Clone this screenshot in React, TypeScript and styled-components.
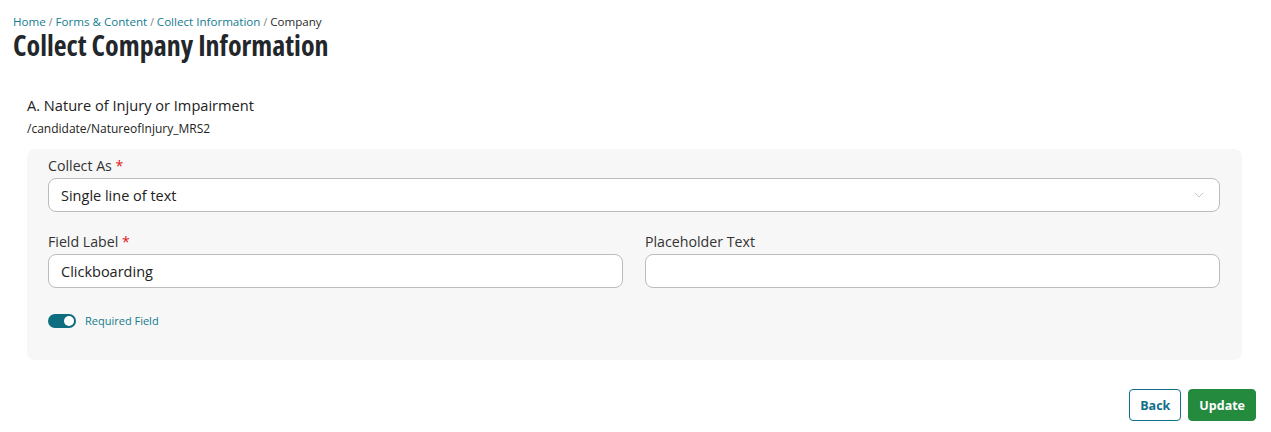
import React from "react";
import styled, { createGlobalStyle } from "styled-components";
import { ChevronDown } from "lucide-react";

const GlobalStyle = createGlobalStyle`
  html, body { margin: 0; padding: 0; background: #ffffff; }
  body { font-family: "Open Sans", "Noto Sans", Arial, sans-serif; color: #222; }
  * { box-sizing: border-box; }
`;

const Page = styled.div`
  display: flex;
  flex-direction: column;
  padding: 14px 15px 0 13px;
`;

const Breadcrumb = styled.nav`
  display: flex;
  align-items: center;
  font-size: 11.6px;
  line-height: 16px;
  color: #333;
`;

const Crumb = styled.a<{ $current?: boolean }>`
  color: ${(p) => (p.$current ? "#2b2b2b" : "#147d90")};
  text-decoration: none;
`;

const Sep = styled.span`
  color: #777;
  margin: 0 3px;
  font-size: 10px;
`;

const Title = styled.h1`
  margin: 0;
  font-family: "Open Sans", "Noto Sans", sans-serif;
  font-stretch: 75%;
  font-weight: 700;
  font-size: 28px;
  line-height: 30px;
  letter-spacing: 0;
  color: #23272b;
`;

const Section = styled.section`
  display: flex;
  flex-direction: column;
  margin: 35px 14px 0 14px;
`;

const SectionHeading = styled.h2`
  margin: 0;
  font-size: 14.6px;
  font-weight: 400;
  line-height: 20px;
  color: #222;
`;

const SectionPath = styled.div`
  margin-top: 6px;
  font-size: 12px;
  line-height: 16px;
  color: #222;
`;

const Panel = styled.div`
  margin-top: 12px;
  background: #f7f7f7;
  border-radius: 8px;
  padding: 8px 22px 32px 21px;
  display: flex;
  flex-direction: column;
`;

const Row = styled.div<{ $cols?: number }>`
  display: grid;
  grid-template-columns: repeat(${(p) => p.$cols ?? 1}, 1fr);
  column-gap: 22px;
  margin-top: ${(p) => (p.$cols ? "21px" : "0")};
`;

const Field = styled.div`
  display: flex;
  flex-direction: column;
`;

const Label = styled.label`
  font-size: 14.2px;
  line-height: 18px;
  color: #333;
  margin-bottom: 3px;
`;

const Req = styled.span`
  color: #e3141b;
`;

const SelectBox = styled.div`
  height: 34px;
  border: 1px solid #bcbcbc;
  border-radius: 8px;
  background: #fff;
  display: flex;
  align-items: center;
  padding: 0 12px;
  font-size: 14.5px;
  color: #222;
`;

const SelectText = styled.span`
  flex: 1;
`;

const Chevron = styled.span`
  display: flex;
  color: #a8a8a8;
`;

const TextInput = styled.input`
  height: 34px;
  border: 1px solid #bcbcbc;
  border-radius: 8px;
  background: #fff;
  padding: 0 12px;
  font-family: inherit;
  font-size: 14.5px;
  color: #222;
  outline: none;
`;

const ToggleRow = styled.div`
  display: flex;
  align-items: center;
  gap: 9px;
  margin-top: 26px;
`;

const Toggle = styled.span<{ $on?: boolean }>`
  position: relative;
  width: 28px;
  height: 14px;
  border-radius: 7px;
  background: ${(p) => (p.$on ? "#0e6e80" : "#bbb")};
  &::after {
    content: "";
    position: absolute;
    top: 2px;
    left: ${(p) => (p.$on ? "16px" : "2px")};
    width: 10px;
    height: 10px;
    border-radius: 50%;
    background: #fff;
  }
`;

const ToggleLabel = styled.span`
  font-size: 11px;
  line-height: 14px;
  color: #137a8c;
`;

const Actions = styled.div`
  display: flex;
  justify-content: flex-end;
  gap: 7px;
  margin-top: 29px;
`;

const Button = styled.button<{ $primary?: boolean }>`
  height: 32px;
  padding: 0 10px;
  border-radius: 4px;
  font-family: inherit;
  font-size: 12.5px;
  font-weight: 700;
  cursor: pointer;
  border: 1px solid ${(p) => (p.$primary ? "#238a3e" : "#10708a")};
  background: ${(p) => (p.$primary ? "#238a3e" : "#fff")};
  color: ${(p) => (p.$primary ? "#fff" : "#10708a")};
`;

export default function App() {
  return (
    <>
      <GlobalStyle />
      <Page>
        <Breadcrumb>
          <Crumb href="#">Home</Crumb>
          <Sep>/</Sep>
          <Crumb href="#">Forms &amp; Content</Crumb>
          <Sep>/</Sep>
          <Crumb href="#">Collect Information</Crumb>
          <Sep>/</Sep>
          <Crumb $current>Company</Crumb>
        </Breadcrumb>
        <Title>Collect Company Information</Title>
        <Section>
          <SectionHeading>A. Nature of Injury or Impairment</SectionHeading>
          <SectionPath>/candidate/NatureofInjury_MRS2</SectionPath>
          <Panel>
            <Row>
              <Field>
                <Label>
                  Collect As <Req>*</Req>
                </Label>
                <SelectBox>
                  <SelectText>Single line of text</SelectText>
                  <Chevron>
                    <ChevronDown size={16} strokeWidth={1} />
                  </Chevron>
                </SelectBox>
              </Field>
            </Row>
            <Row $cols={2}>
              <Field>
                <Label>
                  Field Label <Req>*</Req>
                </Label>
                <TextInput defaultValue="Clickboarding" />
              </Field>
              <Field>
                <Label>Placeholder Text</Label>
                <TextInput defaultValue="" />
              </Field>
            </Row>
            <ToggleRow>
              <Toggle $on />
              <ToggleLabel>Required Field</ToggleLabel>
            </ToggleRow>
          </Panel>
        </Section>
        <Actions>
          <Button>Back</Button>
          <Button $primary>Update</Button>
        </Actions>
      </Page>
    </>
  );
}
